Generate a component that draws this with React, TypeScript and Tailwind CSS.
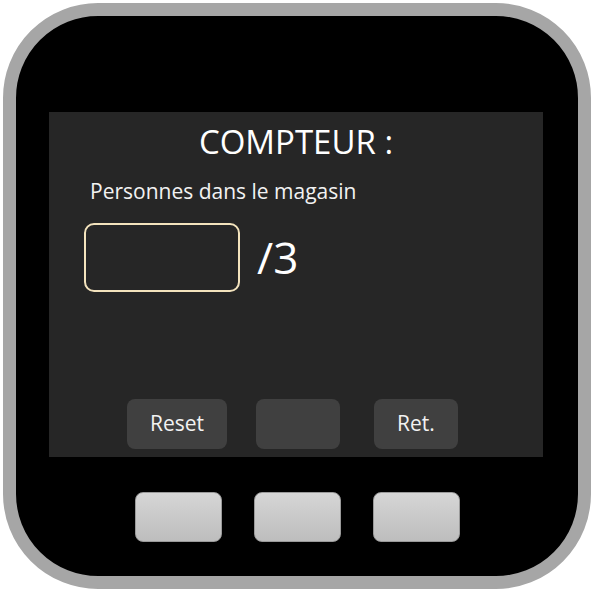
const ScreenButton = ({ label, w }: { label?: string; w: string }) => (
  <div
    className={`${w} h-[50px] rounded-[8px] bg-[#404040] flex items-center justify-center text-[21px] text-[#f2f2f2]`}
  >
    {label}
  </div>
);

const HardButton = () => (
  <div className="w-[87px] h-[50px] rounded-[8px] border border-[#9a9a9a] bg-gradient-to-b from-[#d6d6d6] to-[#bdbdbd]" />
);

export default function App() {
  return (
    <div
      className="w-[594px] h-[593px] bg-white pt-[3px] pl-[3px]"
      style={{ fontFamily: '"Open Sans", sans-serif' }}
    >
      <div className="w-[588px] h-[586px] rounded-[95px] border-[13px] border-[#a6a6a6] bg-black flex flex-col">
        {/* screen */}
        <div className="ml-[33px] mt-[96px] w-[494px] h-[345px] bg-[#262626] flex flex-col">
          <h1 className="text-center text-[33px] leading-none text-white mt-[13px]">COMPTEUR :</h1>
          <p className="ml-[41px] mt-[23px] text-[21px] leading-none text-[#f2f2f2]">Personnes dans le magasin</p>
          <div className="flex items-center ml-[35px] mt-[21px]">
            <div className="w-[156px] h-[69px] rounded-[10px] border-2 border-[#f3e3bd]" />
            <span className="ml-[17px] text-[44px] leading-none text-white -mt-[2px]">/3</span>
          </div>
          <div className="flex mt-auto mb-[8px] ml-[78px]">
            <ScreenButton label="Reset" w="w-[100px]" />
            <div className="w-[29px]" />
            <ScreenButton w="w-[84px]" />
            <div className="w-[34px]" />
            <ScreenButton label="Ret." w="w-[84px]" />
          </div>
        </div>
        {/* physical keys */}
        <div className="flex ml-[119px] mt-[35px] gap-[32px]">
          <HardButton />
          <HardButton />
          <HardButton />
        </div>
      </div>
    </div>
  );
}
